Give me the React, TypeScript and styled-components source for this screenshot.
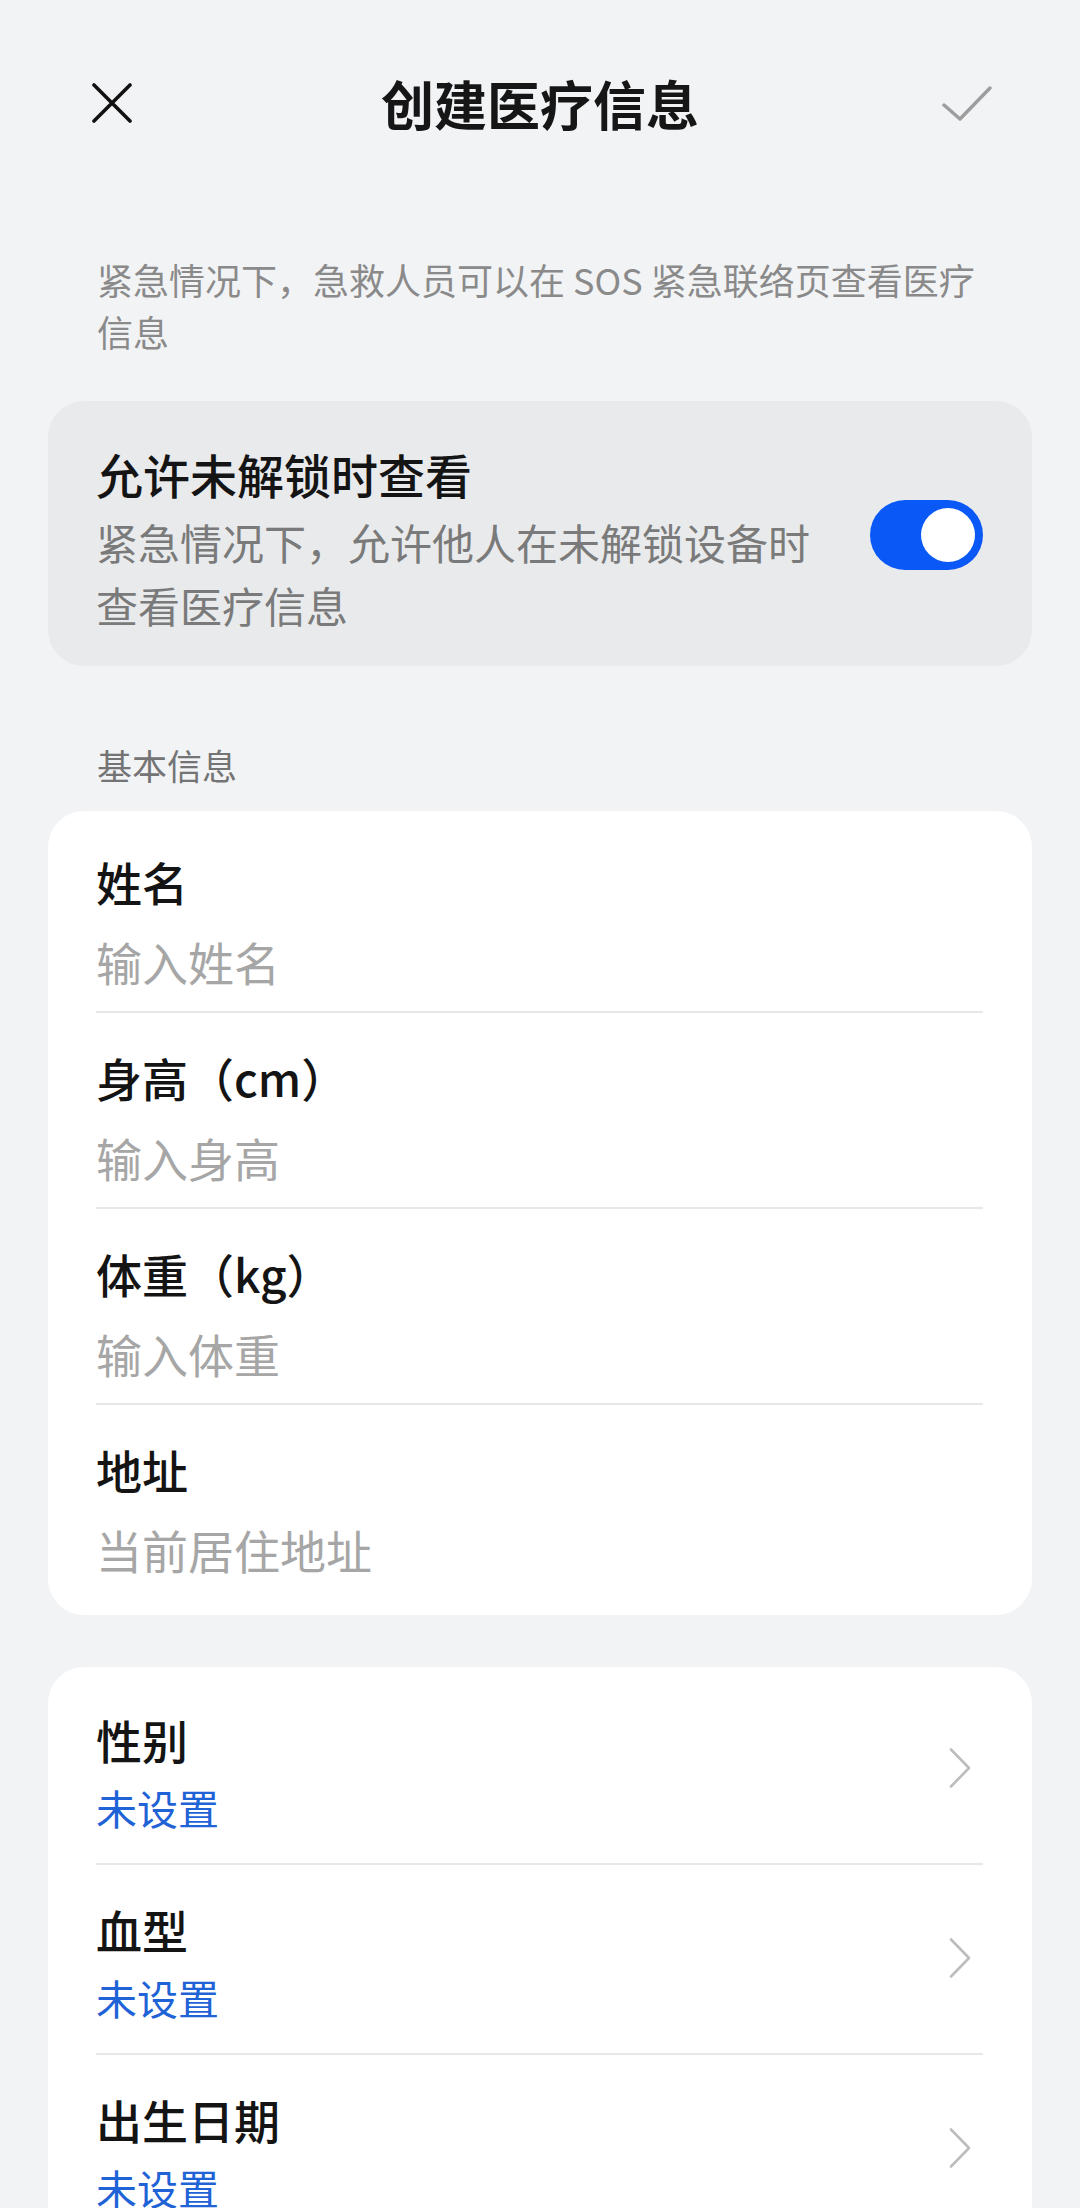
import React from "react";
import styled, { createGlobalStyle } from "styled-components";

const GlobalStyle = createGlobalStyle`
  body {
    margin: 0;
    background: #f2f3f5;
    font-family: "Noto Sans CJK SC", "Noto Sans", sans-serif;
    color: #111;
  }
`;

const Page = styled.div`
  width: 1080px;
  min-height: 2208px;
  background: #f2f3f5;
`;

const Header = styled.header`
  height: 206px;
  padding: 0 88px;
  display: grid;
  grid-template-columns: 1fr auto 1fr;
  align-items: center;
`;

const Title = styled.h1`
  margin: 0;
  font-size: 53px;
  font-weight: 700;
  line-height: 72px;
  color: #161616;
`;

const IconButton = styled.div<{ $end?: boolean }>`
  display: flex;
  justify-content: ${(p) => (p.$end ? "flex-end" : "flex-start")};
  align-items: center;
`;

const Hint = styled.p`
  margin: 47px 0 0;
  padding: 0 88px 0 97px;
  font-size: 36px;
  line-height: 52px;
  color: #8a8a8a;
`;

const ToggleCard = styled.section`
  margin: 44px 48px 0;
  padding: 41px 49px 30px 48px;
  background: #e9eaec;
  border-radius: 36px;
  display: flex;
  align-items: center;
  gap: 40px;
`;

const ToggleText = styled.div`
  flex: 1;
`;

const ToggleTitle = styled.div`
  font-size: 47px;
  font-weight: 500;
  line-height: 64px;
  color: #141414;
`;

const ToggleDesc = styled.div`
  margin-top: 4px;
  font-size: 42px;
  line-height: 63px;
  color: #7a7a7a;
`;

const Switch = styled.div<{ $on: boolean }>`
  flex: none;
  width: 113px;
  height: 70px;
  margin-bottom: 9px;
  box-sizing: border-box;
  padding: 8px;
  border-radius: 35px;
  background: ${(p) => (p.$on ? "#0a59f7" : "#c8c8c8")};
  display: flex;
  justify-content: ${(p) => (p.$on ? "flex-end" : "flex-start")};
`;

const Knob = styled.span`
  width: 54px;
  height: 54px;
  border-radius: 50%;
  background: #fff;
`;

const SectionLabel = styled.div`
  margin: 75px 0 22px;
  padding-left: 97px;
  font-size: 35px;
  line-height: 48px;
  color: #747474;
`;

const Card = styled.section<{ $top: number; $bottom: number }>`
  margin: 0 48px;
  padding: ${(p) => p.$top}px 49px ${(p) => p.$bottom}px 48px;
  background: #fff;
  border-radius: 36px;
`;

const SecondCard = styled(Card)`
  margin-top: 52px;
`;

const FieldRow = styled.div`
  padding: 33px 0 19px;
  border-bottom: 2px solid #e8e8e8;
  &:last-child {
    border-bottom: none;
  }
`;

const Label = styled.div`
  font-size: 46px;
  font-weight: 500;
  line-height: 62px;
  color: #141414;
`;

const Placeholder = styled.div`
  margin-top: 18px;
  font-size: 46px;
  line-height: 62px;
  color: #a6a6a6;
`;

const PickRow = styled.div`
  padding: 33px 0 27px;
  display: flex;
  align-items: center;
  border-bottom: 2px solid #e8e8e8;
  &:last-child {
    border-bottom: none;
  }
`;

const PickText = styled.div`
  flex: 1;
`;

const Value = styled.div`
  margin-top: 8px;
  font-size: 41px;
  line-height: 58px;
  color: #1f63d6;
`;

const Chevron = styled.svg`
  flex: none;
  margin: 0 11px 8px 0;
`;

const fields = [
  { label: "姓名", hint: "输入姓名" },
  { label: "身高（cm）", hint: "输入身高" },
  { label: "体重（kg）", hint: "输入体重" },
  { label: "地址", hint: "当前居住地址" },
];

const picks = ["性别", "血型", "出生日期"];

const App = () => {
  return (
    <Page>
      <GlobalStyle />
      <Header>
        <IconButton>
          <svg width="44" height="40" viewBox="0 0 44 40">
            <path
              d="M6 2 L42 38 M42 2 L6 38"
              stroke="#111"
              strokeWidth="3.6"
              strokeLinecap="round"
              fill="none"
            />
          </svg>
        </IconButton>
        <Title>创建医疗信息</Title>
        <IconButton $end>
          <svg width="52" height="40" viewBox="0 0 52 40">
            <path
              d="M4 22 L20 36 L50 5"
              stroke="#9d9d9d"
              strokeWidth="3.4"
              strokeLinecap="round"
              strokeLinejoin="round"
              fill="none"
            />
          </svg>
        </IconButton>
      </Header>

      <Hint>紧急情况下，急救人员可以在 SOS 紧急联络页查看医疗信息</Hint>

      <ToggleCard>
        <ToggleText>
          <ToggleTitle>允许未解锁时查看</ToggleTitle>
          <ToggleDesc>紧急情况下，允许他人在未解锁设备时查看医疗信息</ToggleDesc>
        </ToggleText>
        <Switch $on role="switch" aria-checked="true">
          <Knob />
        </Switch>
      </ToggleCard>

      <SectionLabel>基本信息</SectionLabel>
      <Card $top={6} $bottom={16}>
        {fields.map((f) => (
          <FieldRow key={f.label}>
            <Label>{f.label}</Label>
            <Placeholder>{f.hint}</Placeholder>
          </FieldRow>
        ))}
      </Card>

      <SecondCard $top={8} $bottom={16}>
        {picks.map((p) => (
          <PickRow key={p}>
            <PickText>
              <Label>{p}</Label>
              <Value>未设置</Value>
            </PickText>
            <Chevron width="24" height="42" viewBox="0 0 24 42">
              <path
                d="M3 2.5 L21 21 L3 39.5"
                stroke="#bdbdbd"
                strokeWidth="2.6"
                strokeLinecap="round"
                strokeLinejoin="round"
                fill="none"
              />
            </Chevron>
          </PickRow>
        ))}
      </SecondCard>
    </Page>
  );
};

export default App;
